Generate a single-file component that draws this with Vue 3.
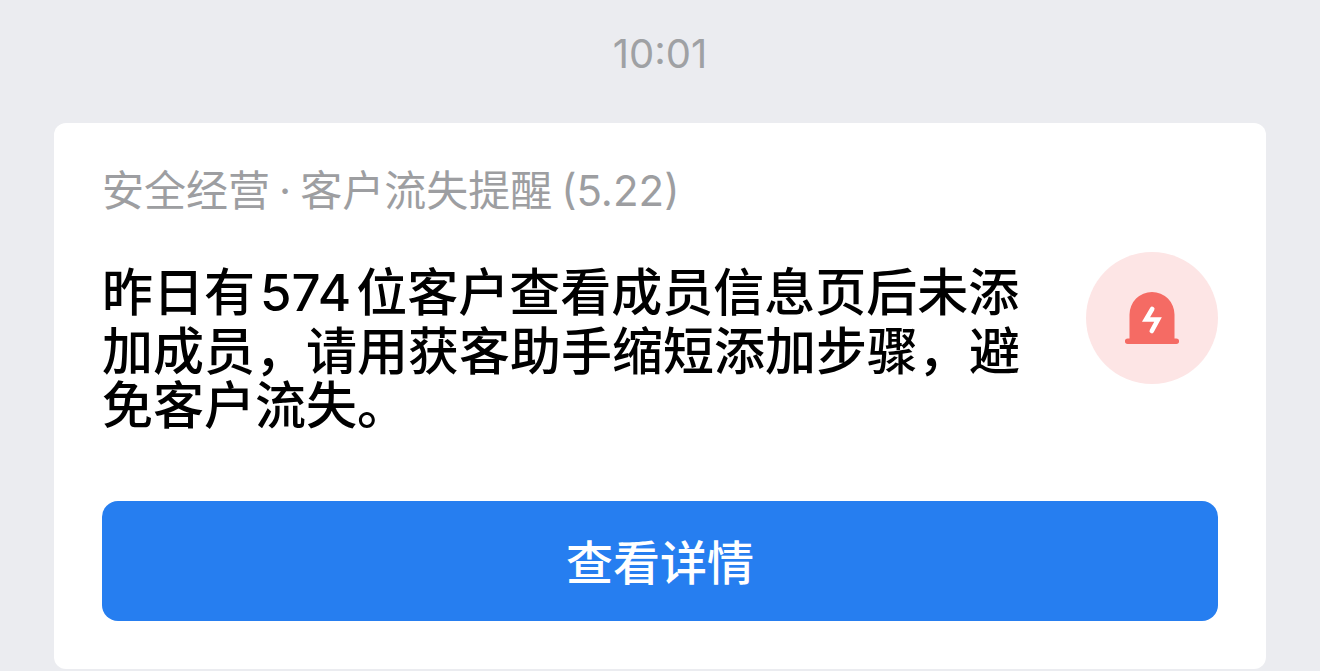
<script setup>
const source = ['安全经营', '·', '客户流失提醒', '(5.22)']
const lines = [
  ['昨日有', '574', '位客户查看成员信息页后未添'],
  ['加成员，请用获客助手缩短添加步骤，避'],
  ['免客户流失。'],
]
</script>

<template>
  <main class="chat">
    <time class="stamp">10:01</time>
    <article class="card">
      <p class="source">
        <span v-for="part in source" :key="part">{{ part }}</span>
      </p>
      <div class="body">
        <h1 class="message">
          <span v-for="line in lines" :key="line[0]" class="line">
            <span v-for="part in line" :key="part">{{ part }}</span>
          </span>
        </h1>
        <svg class="alert" viewBox="0 0 132 132" aria-hidden="true">
          <circle cx="66" cy="66" r="66" fill="#fde5e5" />
          <path d="M43.5 86.5v-24a22.500 22.500 0 0 1 45 0v24h1.800a2.750 2.750 0 0 1 0 5.500H41.700a2.750 2.750 0 0 1 0-5.500z" fill="#f56b64" />
          <path d="M66.2 57 60 67.500h12L65.800 79" fill="none" stroke="#fff" stroke-width="4.600" stroke-linecap="round" stroke-miterlimit="10" />
        </svg>
      </div>
      <button type="button" class="action">查看详情</button>
    </article>
  </main>
</template>

<style>
body {
  background: #ebecf0;
}
</style>

<style scoped>
.chat {
  padding: 32px 54px 2px;
  font-family: Inter, "Noto Sans CJK SC", sans-serif;
}
.stamp {
  display: block;
  margin-bottom: 47px;
  text-align: center;
  font-size: 40px;
  line-height: 44px;
  color: #9fa1a4;
}
.card {
  padding: 40px 48px 48px;
  border-radius: 12px;
  background: #fff;
}
.source {
  display: flex;
  flex-wrap: wrap;
  gap: 9px;
  margin: 0 0 33px;
  font-size: 42px;
  line-height: 56px;
  color: #9d9ea1;
}
.body {
  display: flex;
  align-items: flex-start;
  justify-content: space-between;
  gap: 48px;
}
.message {
  margin: 0;
  padding-top: 9px;
  font-size: 51px;
  font-weight: 500;
  line-height: 54px;
  color: #000;
}
.line {
  display: flex;
  gap: 5px;
  white-space: nowrap;
}
.line:first-child {
  line-height: 64px;
}
.alert {
  flex: none;
  width: 132px;
  height: 132px;
}
.action {
  display: block;
  width: 100%;
  height: 120px;
  margin-top: 68px;
  padding: 0 0 4px;
  border: 0;
  border-radius: 16px;
  background: #267ef0;
  color: #fff;
  font: inherit;
  font-size: 47px;
  font-weight: 500;
}
</style>
